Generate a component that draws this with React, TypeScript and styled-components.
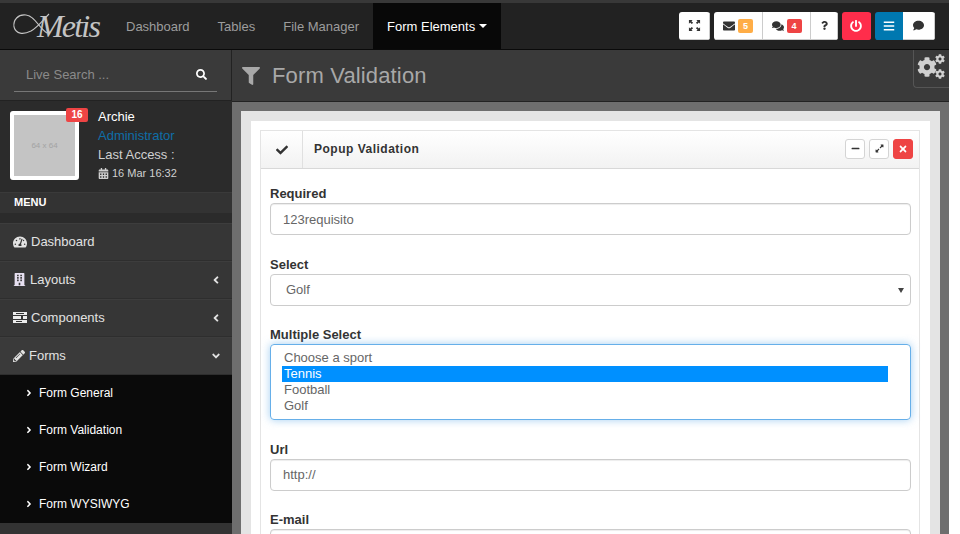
import React from "react";
import styled, { createGlobalStyle } from "styled-components";
import {
  FaAngleDown,
  FaAngleLeft,
  FaAngleRight,
  FaBars,
  FaBuilding,
  FaCalendarAlt,
  FaCheck,
  FaCog,
  FaComment,
  FaComments,
  FaEnvelope,
  FaExpandAlt,
  FaFilter,
  FaMinus,
  FaPencilAlt,
  FaPowerOff,
  FaQuestion,
  FaSearch,
  FaTachometerAlt,
  FaTimes,
} from "react-icons/fa";

const GlobalStyle = createGlobalStyle`
  html, body {
    margin: 0;
    height: 534px;
    overflow: hidden;
    background: #ffffff;
  }
  * {
    box-sizing: border-box;
  }
`;

const navLinks = ["Dashboard", "Tables", "File Manager"];
const subLinks = ["Form General", "Form Validation", "Form Wizard", "Form WYSIWYG"];
const sports = ["Choose a sport", "Tennis", "Football", "Golf"];

export default function App() {
  return (
    <>
      <GlobalStyle />
      <Page>
        <TopBar>
          <Logo>
            <LogoSwash viewBox="0 0 60 36" aria-hidden="true">
              <path
                d="M6 23 C5 16 10 10 18 11 C27 12 31 24 39 29 M6 23 C8 30 15 31 23 27 C30 23 35 16 41 10"
                fill="none"
                stroke="#c4c4c4"
                strokeWidth="1.1"
              />
            </LogoSwash>
            <LogoText>Metis</LogoText>
          </Logo>
          <Nav>
            {navLinks.map((link) => (
              <NavLink key={link}>{link}</NavLink>
            ))}
            <NavLink $active>
              Form Elements <Caret />
            </NavLink>
          </Nav>
          <Tools>
            <ToolGroup>
              <ToolButton $w={31}>
                <ExpandIcon viewBox="0 0 14 14" aria-hidden="true">
                  <path d="M1 1l4 0-1.3 1.3 1.8 1.8-1.4 1.4-1.8-1.8L1 5zM13 1l0 4-1.3-1.3-1.8 1.8-1.4-1.4 1.8-1.8L9 1zM1 13l0-4 1.3 1.3 1.8-1.8 1.4 1.4-1.8 1.8L5 13zM13 13l-4 0 1.3-1.3-1.8-1.8 1.4-1.4 1.8 1.8L13 9z" />
                </ExpandIcon>
              </ToolButton>
            </ToolGroup>
            <ToolGroup>
              <ToolButton $w={49}>
                <FaEnvelope size={12} />
                <CountBadge $tone="#ffad46">5</CountBadge>
              </ToolButton>
              <ToolButton $w={48}>
                <FaComments size={12} />
                <CountBadge $tone="#ee4444">4</CountBadge>
              </ToolButton>
              <ToolButton $w={27}>
                <FaQuestion size={9} />
              </ToolButton>
            </ToolGroup>
            <ToolGroup>
              <ToolButton $w={29} $tone="#ff2d4b">
                <FaPowerOff size={12} />
              </ToolButton>
            </ToolGroup>
            <ToolGroup>
              <ToolButton $w={28} $tone="#0078b0">
                <FaBars size={12} />
              </ToolButton>
              <ToolButton $w={32}>
                <FaComment size={11} />
              </ToolButton>
            </ToolGroup>
          </Tools>
        </TopBar>

        <Body>
          <Sidebar>
            <SearchBar>
              <SearchField>
                <span>Live Search ...</span>
                <FaSearch size={11} color="#ffffff" />
              </SearchField>
            </SearchBar>
            <UserCard>
              <Avatar>
                <AvatarInner>64 x 64</AvatarInner>
                <AvatarBadge>16</AvatarBadge>
              </Avatar>
              <UserInfo>
                <UserName>Archie</UserName>
                <UserRole>Administrator</UserRole>
                <UserAccess>Last Access :</UserAccess>
                <UserDate>
                  <FaCalendarAlt size={11} /> 16 Mar 16:32
                </UserDate>
              </UserInfo>
            </UserCard>
            <MenuHeader>MENU</MenuHeader>
            <MenuGap />
            <MenuRow>
              <MenuLabel>
                <FaTachometerAlt size={14} /> Dashboard
              </MenuLabel>
            </MenuRow>
            <MenuRow>
              <MenuLabel>
                <LayoutIcon size={13} /> Layouts
              </MenuLabel>
              <FaAngleLeft size={12} />
            </MenuRow>
            <MenuRow>
              <MenuLabel>
                <BarsIcon viewBox="0 0 14 11" aria-hidden="true">
                  <path d="M0 0h14v3H0zM0 4h8v3H0zM10 4h4v3h-4zM0 8h14v3H0z" />
                  <rect x="3" y="1" width="8" height="1" fill="#333333" />
                  <rect x="3" y="9" width="6" height="1" fill="#333333" />
                </BarsIcon>{" "}
                Components
              </MenuLabel>
              <FaAngleLeft size={12} />
            </MenuRow>
            <MenuRow $open>
              <MenuLabel>
                <FaPencilAlt size={12} /> Forms
              </MenuLabel>
              <FaAngleDown size={12} />
            </MenuRow>
            <SubMenu>
              {subLinks.map((link) => (
                <SubRow key={link}>
                  <FaAngleRight size={10} />
                  {link}
                </SubRow>
              ))}
            </SubMenu>
          </Sidebar>

          <Main>
            <PageHead>
              <FaFilter size={18} />
              <PageTitle>Form Validation</PageTitle>
              <GearTab>
                <GearBig size={20} />
                <GearSmallTop size={10} />
                <GearSmallBottom size={10} />
              </GearTab>
            </PageHead>
            <Content>
              <OuterPanel>
                <InnerPanel>
                  <Box>
                    <BoxHead>
                      <BoxIcon>
                        <FaCheck size={12} />
                      </BoxIcon>
                      <BoxTitle>Popup Validation</BoxTitle>
                      <BoxTools>
                        <BoxTool>
                          <FaMinus size={9} />
                        </BoxTool>
                        <BoxTool>
                          <FaExpandAlt size={9} />
                        </BoxTool>
                        <BoxTool $danger>
                          <FaTimes size={10} />
                        </BoxTool>
                      </BoxTools>
                    </BoxHead>
                    <Form>
                      <Field>
                        <Label>Required</Label>
                        <Input defaultValue="123requisito" />
                      </Field>
                      <Field>
                        <Label>Select</Label>
                        <SelectBox>
                          Golf
                          <SelectArrow />
                        </SelectBox>
                      </Field>
                      <Field>
                        <Label>Multiple Select</Label>
                        <ListBox>
                          {sports.map((sport) => (
                            <ListOption key={sport} $selected={sport === "Tennis"}>
                              {sport}
                            </ListOption>
                          ))}
                        </ListBox>
                      </Field>
                      <Field>
                        <Label>Url</Label>
                        <Input defaultValue="http://" />
                      </Field>
                      <Field>
                        <Label>E-mail</Label>
                        <Input />
                      </Field>
                    </Form>
                  </Box>
                </InnerPanel>
              </OuterPanel>
            </Content>
          </Main>
        </Body>
      </Page>
    </>
  );
}

const Page = styled.div`
  width: 949px;
  height: 534px;
  overflow: hidden;
  display: flex;
  flex-direction: column;
  background: #333333;
  font-family: "Liberation Sans", Arial, sans-serif;
  font-size: 13px;
  color: #333333;
`;

const TopBar = styled.header`
  flex: none;
  height: 50px;
  display: flex;
  align-items: stretch;
  background: #222222;
  border-top: 3px solid #383838;
  border-bottom: 1px solid #0a0a0a;
`;

const Logo = styled.div`
  position: relative;
  width: 112px;
  padding-left: 37px;
  display: flex;
  align-items: center;
`;

const LogoText = styled.span`
  font-family: "Liberation Serif", serif;
  font-style: italic;
  font-size: 32px;
  letter-spacing: -1.8px;
  color: #c4c4c4;
`;

const LogoSwash = styled.svg`
  position: absolute;
  left: 8px;
  top: 1px;
  width: 60px;
  height: 36px;
`;

const Nav = styled.nav`
  display: flex;
`;

const NavLink = styled.a<{ $active?: boolean }>`
  display: flex;
  align-items: center;
  gap: 4px;
  padding: 0 14px;
  height: 46px;
  color: ${(p) => (p.$active ? "#ffffff" : "#9d9d9d")};
  background: ${(p) => (p.$active ? "#080808" : "transparent")};
`;

const Caret = styled.span`
  width: 0;
  height: 0;
  border-left: 4px solid transparent;
  border-right: 4px solid transparent;
  border-top: 4px solid #ffffff;
`;

const Tools = styled.div`
  margin-left: auto;
  margin-right: 14px;
  display: flex;
  align-items: center;
  gap: 4px;
`;

const ToolGroup = styled.div`
  display: flex;
  height: 28px;
  border-radius: 3px;
  overflow: hidden;
`;

const ToolButton = styled.button<{ $tone?: string; $w: number }>`
  width: ${(p) => p.$w}px;
  height: 28px;
  padding: 0;
  display: flex;
  align-items: center;
  justify-content: center;
  gap: 3px;
  border: 1px solid ${(p) => p.$tone ?? "#cccccc"};
  border-width: 0 1px 1px 0;
  background: ${(p) => p.$tone ?? "#ffffff"};
  color: ${(p) => (p.$tone ? "#ffffff" : "#333333")};
`;

const ExpandIcon = styled.svg`
  width: 13px;
  height: 13px;
  fill: #333333;
`;

const CountBadge = styled.span<{ $tone: string }>`
  width: 15px;
  height: 14px;
  border-radius: 2px;
  background: ${(p) => p.$tone};
  color: #ffffff;
  font-size: 9px;
  font-weight: 700;
  line-height: 14px;
  text-align: center;
`;

const Body = styled.div`
  flex: 1;
  min-height: 0;
  display: flex;
`;

const Sidebar = styled.aside`
  flex: none;
  width: 232px;
  background: #333333;
`;

const SearchBar = styled.div`
  height: 51px;
  padding: 9px 14px 0;
  background: #3a3a3a;
  border-right: 1px solid #222222;
  border-bottom: 1px solid #222222;
`;

const SearchField = styled.div`
  height: 33px;
  padding: 0 10px 1px 12px;
  display: flex;
  align-items: center;
  justify-content: space-between;
  border-bottom: 1px solid #777777;
  color: #8a8a8a;
`;

const UserCard = styled.div`
  height: 92px;
  padding: 6px 0 0 10px;
  display: flex;
  gap: 19px;
  background: #2b2b2b;
  border-bottom: 1px solid #3a3a3a;
`;

const Avatar = styled.div`
  position: relative;
  width: 69px;
  height: 69px;
  border: 4px solid #ffffff;
  border-radius: 3px;
  margin-top: 4px;
`;

const AvatarInner = styled.div`
  width: 100%;
  height: 100%;
  display: flex;
  align-items: center;
  justify-content: center;
  background: #c4c4c4;
  color: #a3a3a3;
  font-size: 8px;
`;

const AvatarBadge = styled.span`
  position: absolute;
  top: -7px;
  right: -13px;
  width: 22px;
  height: 14px;
  border-radius: 2px;
  background: #ee4444;
  color: #ffffff;
  font-size: 10px;
  font-weight: 700;
  line-height: 14px;
  text-align: center;
`;

const UserInfo = styled.div`
  display: flex;
  flex-direction: column;
  line-height: 19px;
  font-size: 13px;
`;

const UserName = styled.span`
  color: #ffffff;
`;

const UserRole = styled.span`
  color: #0f6ea8;
`;

const UserAccess = styled.span`
  color: #d0d0d0;
`;

const UserDate = styled.span`
  display: flex;
  align-items: center;
  gap: 3px;
  font-size: 11px;
  color: #d0d0d0;
`;

const MenuHeader = styled.div`
  height: 20px;
  padding-left: 14px;
  background: #333333;
  color: #ffffff;
  font-size: 11px;
  font-weight: 700;
  line-height: 19px;
`;

const MenuGap = styled.div`
  height: 10px;
  background: #2b2b2b;
`;

const MenuRow = styled.div<{ $open?: boolean }>`
  height: 38px;
  padding: 0 10px 1px 13px;
  display: flex;
  align-items: center;
  justify-content: space-between;
  background: ${(p) => (p.$open ? "#3a3a3a" : "#363636")};
  border-top: 1px solid #3d3d3d;
  border-bottom: 1px solid #2e2e2e;
  color: #e2e2e2;
`;

const MenuLabel = styled.span`
  display: flex;
  align-items: center;
  gap: 4px;
`;

const LayoutIcon = styled(FaBuilding)`
  color: #e6dff0;
`;

const BarsIcon = styled.svg`
  width: 14px;
  height: 11px;
  fill: #ececec;
`;

const SubMenu = styled.div`
  height: 148px;
  background: #0a0a0a;
`;

const SubRow = styled.div`
  height: 37px;
  padding: 0 0 2px 24px;
  display: flex;
  align-items: center;
  gap: 5px;
  color: #ffffff;
  font-size: 12px;
`;

const Main = styled.main`
  flex: 1;
  min-width: 0;
  display: flex;
  flex-direction: column;
`;

const PageHead = styled.div`
  position: relative;
  flex: none;
  height: 52px;
  padding: 0 0 0 10px;
  display: flex;
  align-items: center;
  gap: 12px;
  background: #3a3a3a;
  border-bottom: 1px solid #222222;
  color: #a8a8a8;
`;

const PageTitle = styled.h1`
  margin: 0;
  font-size: 22px;
  font-weight: 400;
  letter-spacing: 0.15px;
  color: #a8a8a8;
`;

const GearTab = styled.div`
  position: absolute;
  top: 0;
  right: 0;
  width: 36px;
  height: 38px;
  background: #3a3a3a;
  border: 1px solid #555555;
  border-width: 0 0 1px 1px;
  border-radius: 0 0 0 4px;
  color: #d0d0d0;
`;

const GearBig = styled(FaCog)`
  position: absolute;
  left: 3px;
  top: 7px;
`;

const GearSmallTop = styled(FaCog)`
  position: absolute;
  right: 4px;
  top: 4px;
`;

const GearSmallBottom = styled(FaCog)`
  position: absolute;
  right: 4px;
  top: 19px;
`;

const Content = styled.div`
  flex: 1;
  min-height: 0;
  padding: 9px 9px 0 9px;
  background: #6e6e6e;
`;

const OuterPanel = styled.div`
  height: 100%;
  padding: 10px 10px 0;
  background: #e4e4e4;
`;

const InnerPanel = styled.div`
  height: 100%;
  padding: 9px 10px 0 9px;
  background: #ffffff;
`;

const Box = styled.section`
  border: 1px solid #e4e4e4;
  border-bottom: 0;
`;

const BoxHead = styled.div`
  height: 38px;
  padding-bottom: 2px;
  display: flex;
  align-items: center;
  background: linear-gradient(#ffffff, #f2f2f2);
  border-bottom: 1px solid #d8d8d8;
`;

const BoxIcon = styled.span`
  width: 42px;
  align-self: stretch;
  margin-bottom: -2px;
  display: flex;
  align-items: center;
  justify-content: center;
  border-right: 1px solid #e0e0e0;
`;

const BoxTitle = styled.h5`
  margin: 0 0 0 11px;
  font-size: 12px;
  font-weight: 700;
  letter-spacing: 0.5px;
`;

const BoxTools = styled.div`
  margin-left: auto;
  margin-right: 6px;
  display: flex;
  gap: 4px;
`;

const BoxTool = styled.button<{ $danger?: boolean }>`
  width: 20px;
  height: 20px;
  padding: 0;
  display: flex;
  align-items: center;
  justify-content: center;
  background: ${(p) => (p.$danger ? "#ee4444" : "#ffffff")};
  border: 1px solid ${(p) => (p.$danger ? "#ee4444" : "#d4d4d4")};
  border-radius: 3px;
  color: ${(p) => (p.$danger ? "#ffffff" : "#333333")};
`;

const Form = styled.div`
  padding: 17px 8px 0 9px;
  display: flex;
  flex-direction: column;
  gap: 21.5px;
`;

const Field = styled.div`
  display: flex;
  flex-direction: column;
`;

const Label = styled.label`
  height: 17px;
  font-size: 13px;
  font-weight: 700;
  line-height: 15px;
`;

const Input = styled.input`
  width: 100%;
  height: 32px;
  padding: 0 12px;
  border: 1px solid #cccccc;
  border-radius: 4px;
  background: #ffffff;
  box-shadow: inset 0 1px 1px rgba(0, 0, 0, 0.075);
  color: #666666;
  font-family: inherit;
  font-size: 13px;
`;

const SelectBox = styled.div`
  position: relative;
  height: 32px;
  padding: 0 15px;
  display: flex;
  align-items: center;
  border: 1px solid #cccccc;
  border-radius: 4px;
  color: #666666;
`;

const SelectArrow = styled.span`
  position: absolute;
  right: 6px;
  top: 13px;
  border-left: 3px solid transparent;
  border-right: 3px solid transparent;
  border-top: 5px solid #444444;
`;

const ListBox = styled.div`
  height: 76px;
  padding: 5px 22px 0 11px;
  border: 1px solid #66afe9;
  border-radius: 4px;
  box-shadow: 0 0 8px rgba(102, 175, 233, 0.6);
`;

const ListOption = styled.div<{ $selected?: boolean }>`
  height: 16px;
  padding-left: 2px;
  line-height: 16px;
  background: ${(p) => (p.$selected ? "#0090ff" : "transparent")};
  color: ${(p) => (p.$selected ? "#ffffff" : "#666666")};
`;
